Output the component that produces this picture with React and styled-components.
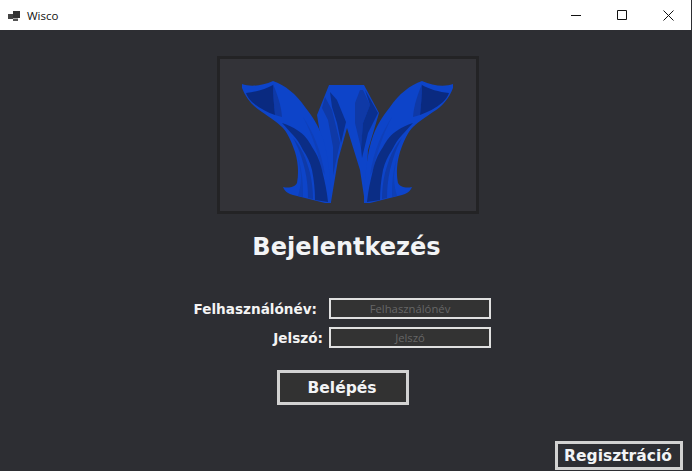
import React from 'react'
import styled, { createGlobalStyle } from 'styled-components';

const Global = createGlobalStyle`
html, body { margin: 0; padding: 0; height: 100%; overflow: hidden; background: #2d2e33; }
#root { height: 100%; }
* { box-sizing: border-box; }
`

const App = () => {
    return (
        <Wrap>
            <Global />
            <TitleBar>
                <AppIcon viewBox="0 0 13 11">
                    <path d="M0 4h5v5H0z" fill="#444" />
                    <path d="M5 1h7v7H5z" fill="#333" />
                    <path d="M5 8.500h5V11H5z" fill="#555" />
                </AppIcon>
                <AppName>Wisco</AppName>
                <WinControls>
                    <WinButton aria-label="Minimize">
                        <svg width="10" height="10" viewBox="0 0 10 10"><path d="M0 5.500h10" stroke="#111" fill="none" /></svg>
                    </WinButton>
                    <WinButton aria-label="Maximize">
                        <svg width="10" height="10" viewBox="0 0 10 10"><path d="M.5.500h9v9h-9z" stroke="#111" fill="none" /></svg>
                    </WinButton>
                    <WinButton aria-label="Close">
                        <svg width="11" height="11" viewBox="0 0 11 11"><path d="M.5.500l10 10M10.500.500l-10 10" stroke="#111" fill="none" /></svg>
                    </WinButton>
                </WinControls>
            </TitleBar>
            <Content>
                <LogoBox>
                    <Logo />
                </LogoBox>
                <Title>Bejelentkezés</Title>
                <Form>
                    <Row>
                        <Label>Felhasználónév:</Label>
                        <Input placeholder="Felhasználónév" />
                    </Row>
                    <Row $gap={6}>
                        <Label>Jelszó:</Label>
                        <Input placeholder="Jelszó" />
                    </Row>
                </Form>
                <LoginButton>Belépés</LoginButton>
                <RegisterButton>Regisztráció</RegisterButton>
            </Content>
        </Wrap>
    )
}

// one wing of the W, the other side is the same shape mirrored
const Wing = () => (
    <>
        <path fill="#0d44c9" d="M242 84C250 87 262 86 273 81C285 85 296 94 305 107C313 117 318 125 322 136C328 152 331 180 331 203L325 203L293 195C289 194 285 192 283 187C288 188 294 188 297 183C299 172 298 162 295 152C291 140 287 132 282 127C276 121 270 118 262 112C252 106 246 98 242 88Z" />
        <path fill="#0f39a6" d="M273 84C277 94 281 104 282 117L275 115C274 105 273 95 273 84Z" />
        <path fill="#0a2a80" d="M246 93C256 92 266 89 273 85C273 95 274 105 275 115C267 112 259 108 252 102C249 99 247 96 246 93Z" />
        <path fill="#0f3fb8" d="M303 117C313 132 321 150 325 175L322 170C318 152 311 132 303 117Z" />
        <path fill="#0b2d85" d="M282 123C288 125 293 127 297 130C304 134 309 141 312 147C318 156 320 162 322 170C325 182 327 192 328 202L315 200C315 190 314 180 312 170C310 162 307 156 303 150C300 144 297 139 293 135C289 131 286 127 282 123Z" />
        <path fill="#0f3aa8" d="M293 138C297 142 300 147 303 153C306 159 308 166 310 173C312 182 313 190 313 199L308 198C308 188 307 179 305 170C303 162 301 155 298 148C296 144 295 141 293 138Z" />
        <path fill="#0e3fb6" d="M297 153C299 160 301 168 302 176C303 183 303 190 303 197L298 196C300 190 301 183 301 176C300 168 299 160 297 153Z" />
    </>
)

const Logo = () => (
    <svg width="214" height="126" viewBox="241 79 214 126">
        {/* the middle of the W sits behind both wings */}
        <path fill="#0d44c9" d="M329 85H364L379 113L368 150L365 203L360 170L347 128L338 160L331 202L317 115Z" />
        <path fill="#0f39a6" d="M325 97L332 110L340 143L333 175L333 147L328 120L322 108Z" />
        <path fill="#0a2f8e" d="M330 92L337 100L346 122L341 143L337 123L332 107Z" />
        <path fill="#0f39a6" d="M360 90H363L370 105L363 123L361 148L355 123L355 103Z" />
        <path fill="#0a2f8e" d="M365 90L378 113L368 133L362 158L361 148L363 123L370 105Z" />
        <Wing />
        <g transform="translate(695 0) scale(-1 1)">
            <Wing />
        </g>
    </svg>
)

export default App;

const Wrap = styled.div`
height:100%;
display:flex;
flex-direction:column;
font-family:'DejaVu Sans', sans-serif;
color:#f0f0f0;
`
const TitleBar = styled.div`
height:30px;
flex:none;
background:#fff;
display:flex;
align-items:center;
padding-left:8px;
margin-right:1px;
`
const AppIcon = styled.svg`
width:13px;
height:11px;
margin-right:6px;
`
const AppName = styled.span`
font-family:'Open Sans', sans-serif;
font-size:11.500px;
color:#111;
`
const WinControls = styled.div`
margin-left:auto;
display:flex;
height:100%;
`
const WinButton = styled.div`
width:46px;
height:100%;
display:flex;
align-items:center;
justify-content:center;
`
const Content = styled.div`
flex:1;
display:flex;
flex-direction:column;
align-items:center;
padding:26px 8px 0;
`
const LogoBox = styled.div`
width:262px;
height:158px;
flex:none;
margin-left:4px;
background:#333338;
border:3px solid #232325;
padding-top:20px;
display:flex;
justify-content:center;
`
const Title = styled.h1`
font-size:24px;
font-weight:bold;
line-height:30px;
margin:18px 0 0 1px;
color:#f2f4f6;
`
const Form = styled.div`
display:flex;
flex-direction:column;
align-items:flex-end;
gap:8px;
margin-top:36px;
align-self:flex-start;
width:483px;
`
const Row = styled.div`
display:flex;
align-items:center;
gap:${props => props.$gap || 12}px;
`
const Label = styled.label`
font-size:13.600px;
font-weight:bold;
color:#f4f4f4;
`
const Input = styled.input`
width:162px;
height:21px;
padding:0;
background:#333333;
border:2px solid #e0e0e0;
text-align:center;
font-family:'Open Sans', sans-serif;
font-size:11.300px;
color:#eee;
outline:none;
&::placeholder{
    color:#666;
    opacity:1;
}
`
const LoginButton = styled.button`
width:132px;
height:35px;
margin-top:22px;
margin-left:-6px;
padding:0 2px 0 0;
background:#323232;
border:3px solid #d2d2d2;
font-family:'DejaVu Sans', sans-serif;
font-size:15.500px;
font-weight:bold;
color:#f2f4f6;
`
const RegisterButton = styled(LoginButton)`
width:128px;
height:29px;
margin:auto 1px 1px 0;
align-self:flex-end;
background:#2d2e33;
`
